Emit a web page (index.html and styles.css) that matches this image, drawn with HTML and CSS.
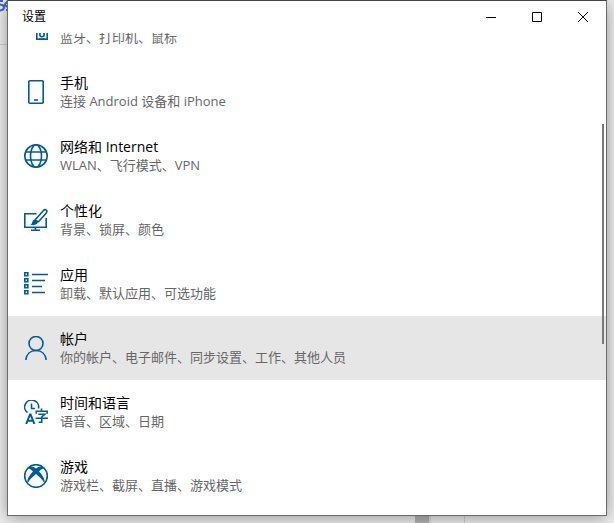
FILE: index.html
```html
<!DOCTYPE html>
<html lang="zh-CN">
<head>
    <meta charset="UTF-8">
    <meta name="viewport" content="width=device-width, initial-scale=1.0">
    <title>设置</title>
    <link rel="stylesheet" href="styles.css">
</head>
<body>
    <div class="backdrop">
        <div class="backdrop-header">
            <svg width="8" height="12" viewBox="0 0 8 12" fill="none" stroke="#3a6ae0" stroke-width="2"><path d="M0 1h3M0 4.500q4 .5 4 3T0 10.500M8 1L5 4M4 4l3 3M6 10h2"/></svg>
        </div>
        <div class="backdrop-scroll"></div>
        <div class="backdrop-line"></div>
    </div>
    <main class="window">
        <header class="title-bar">
            <h1 class="window-title">设置</h1>
            <div class="window-controls">
                <button type="button" aria-label="最小化">
                    <svg width="10" height="10" viewBox="0 0 10 10" fill="none" stroke="#000"><path d="M0 5.5h10"/></svg>
                </button>
                <button type="button" aria-label="最大化">
                    <svg width="10" height="10" viewBox="0 0 10 10" fill="none" stroke="#000"><path d="M.5 .5h9v9h-9z"/></svg>
                </button>
                <button type="button" aria-label="关闭">
                    <svg width="10" height="10" viewBox="0 0 10 10" fill="none" stroke="#000"><path d="M0 0l10 10M10 0L0 10"/></svg>
                </button>
            </div>
        </header>
        <div class="content">
            <nav class="categories">
                <a class="category" href="#devices">
                    <svg class="icon" viewBox="0 0 24 24"><path d="M1 2h8v11H1z"/><rect x="12.800" y="7" width="10.400" height="16.200"/><circle cx="18" cy="18.500" r="2.200"/><path d="M18 10v1.500M15 23h6"/></svg>
                    <span class="text">
                        <span class="name">设备</span>
                        <span class="detail">蓝牙、打印机、鼠标</span>
                    </span>
                </a>
                <a class="category" href="#phone">
                    <svg class="icon" viewBox="0 0 24 24"><rect x="4.8" y=".8" width="14.4" height="22.4" rx="1"/><path d="M10 20h4"/></svg>
                    <span class="text">
                        <span class="name">手机</span>
                        <span class="detail">连接 Android 设备和 iPhone</span>
                    </span>
                </a>
                <a class="category" href="#network">
                    <svg class="icon" viewBox="0 0 24 24"><circle cx="12" cy="12" r="11.2"/><ellipse cx="12" cy="12" rx="5.5" ry="11.2"/><path d="M2 8h20M2 16h20"/></svg>
                    <span class="text">
                        <span class="name">网络和 Internet</span>
                        <span class="detail">WLAN、飞行模式、VPN</span>
                    </span>
                </a>
                <a class="category" href="#personalization">
                    <svg class="icon" viewBox="0 0 24 24"><path d="M12.500 5.800H.8v13.400h21.400V10M11.500 19v3M7 22.200h9"/><path d="M11 12L19.300 2.700q1.600-1.700 3-.5t-.2 3L14 14.300M11 12q2.200.4 3 2.300"/><path class="solid" d="M10.800 11.500q4 1 2.800 3.800-1.800 2.600-7.300 1.500 1.700-.7 1.900-2.500.5-2.500 2.600-2.800z"/></svg>
                    <span class="text">
                        <span class="name">个性化</span>
                        <span class="detail">背景、锁屏、颜色</span>
                    </span>
                </a>
                <a class="category" href="#apps">
                    <svg class="icon" viewBox="0 0 24 24"><path d="M.8 .8h3v3h-3zM.8 6.800h3v3h-3zM.8 12.800h3v3h-3zM.8 18.800h3v3h-3zM8 2.500h16M8 8.500h13M8 14.500h10M8 20.500h13"/></svg>
                    <span class="text">
                        <span class="name">应用</span>
                        <span class="detail">卸载、默认应用、可选功能</span>
                    </span>
                </a>
                <a class="category active" href="#accounts">
                    <svg class="icon" viewBox="0 0 24 24"><circle cx="12" cy="7.500" r="7"/><path d="M1.800 24c.5-6 4.700-9.500 10.200-9.500s9.700 3.500 10.200 9.500"/></svg>
                    <span class="text">
                        <span class="name">帐户</span>
                        <span class="detail">你的帐户、电子邮件、同步设置、工作、其他人员</span>
                    </span>
                </a>
                <a class="category" href="#time">
                    <svg class="icon" viewBox="0 0 24 24"><path d="M3.500 12.700A7 7 0 1 1 14.500 8.500M7.500 3.500v5h3.500"/><path class="bold" d="M2.200 24L6 14.500h.6L10.400 24M3.500 20.800h5.600"/><path d="M17.500 8.500v2.500M12.300 13.800V11.300h10.900v2.500M14.300 14.200h6.500L17.700 17v5.300h-3M11.500 18.300H24"/></svg>
                    <span class="text">
                        <span class="name">时间和语言</span>
                        <span class="detail">语音、区域、日期</span>
                    </span>
                </a>
                <a class="category" href="#gaming">
                    <svg class="icon" viewBox="0 0 24 24"><circle cx="12" cy="12" r="11.300"/><path class="solid" d="M5.300 2.800C8 2 10.300 3.300 12 4.500c1.700-1.200 4-2.500 6.700-1.700L20.600 4.500C18.500 4 16.600 5.700 15 7.400c3.300 3.500 6.500 8 5.500 12.200C19 16.200 15.500 12.500 12 9.900c-3.500 2.600-7 6.300-8.500 9.700C2.500 15.400 5.700 10.900 9 7.400 7.400 5.700 5.500 4 3.400 4.500z"/></svg>
                    <span class="text">
                        <span class="name">游戏</span>
                        <span class="detail">游戏栏、截屏、直播、游戏模式</span>
                    </span>
                </a>
            </nav>
            <div class="scroll-thumb"></div>
        </div>
    </main>
</body>
</html>
```

FILE: styles.css
```css
* {
    box-sizing: border-box;
}

body {
    display: flex;
    height: 100vh;
    margin: 0;
    padding: 0 7px 7px;
    overflow: hidden;
    background-color: #f0f0f0;
    font-family: "Open Sans", "Noto Sans CJK SC", sans-serif;
}

/* what shows around the window */
.backdrop {
    position: absolute;
    inset: 0;
    overflow: hidden;
}

.backdrop-header {
    width: 8px;
    height: 45px;
    border-bottom: 1px solid #cfcfcf;
}

.backdrop-header svg {
    display: block;
}

.backdrop-scroll {
    position: absolute;
    bottom: 0;
    left: 415px;
    width: 16px;
    height: 20px;
    background-color: #b8b8b8;
    border-right: 2px solid #e0e0e0;
}

.backdrop-line {
    position: absolute;
    bottom: 0;
    left: 464px;
    width: 1px;
    height: 20px;
    background-color: #d0d0dc;
}

.window {
    position: relative;
    flex: 1;
    display: flex;
    flex-direction: column;
    min-width: 0;
    border: 1px solid #6b6b6b;
    border-top-color: #444;
    background-color: #fff;
    box-shadow: 0 2px 16px rgba(0, 0, 0, 0.4);
}

.title-bar {
    flex: none;
    display: flex;
    justify-content: space-between;
    align-items: center;
    height: 32px;
    padding-left: 14px;
}

.window-title {
    margin: 0;
    font-size: 12px;
    font-weight: normal;
    line-height: 18px;
    color: #000;
}

.window-controls {
    display: flex;
    height: 100%;
}

.window-controls button {
    display: flex;
    justify-content: center;
    align-items: center;
    width: 46px;
    padding: 0;
    border: none;
    background: none;
}

.content {
    position: relative;
    flex: 1;
    min-height: 0;
    overflow: hidden;
}

/* list is scrolled down by a few rows */
.categories {
    margin-top: -37px;
}

.category {
    display: flex;
    align-items: center;
    gap: 12px;
    height: 64px;
    padding: 0 16px;
    color: #000;
    text-decoration: none;
}

.category.active {
    background-color: #e6e6e6;
}

.icon {
    flex: none;
    width: 24px;
    height: 24px;
    fill: none;
    stroke: #005a9e;
    stroke-width: 1.6;
}

.icon .solid {
    fill: #005a9e;
    stroke: none;
}

.icon .bold {
    stroke-width: 2;
}

.text {
    display: flex;
    flex-direction: column;
    white-space: nowrap;
}

.name {
    font-size: 14px;
    line-height: 18px;
}

.detail {
    font-size: 13px;
    line-height: 18px;
    color: #666;
}

.scroll-thumb {
    position: absolute;
    top: 91px;
    right: 2px;
    width: 2px;
    height: 220px;
    background-color: #7a7a7a;
}
```
